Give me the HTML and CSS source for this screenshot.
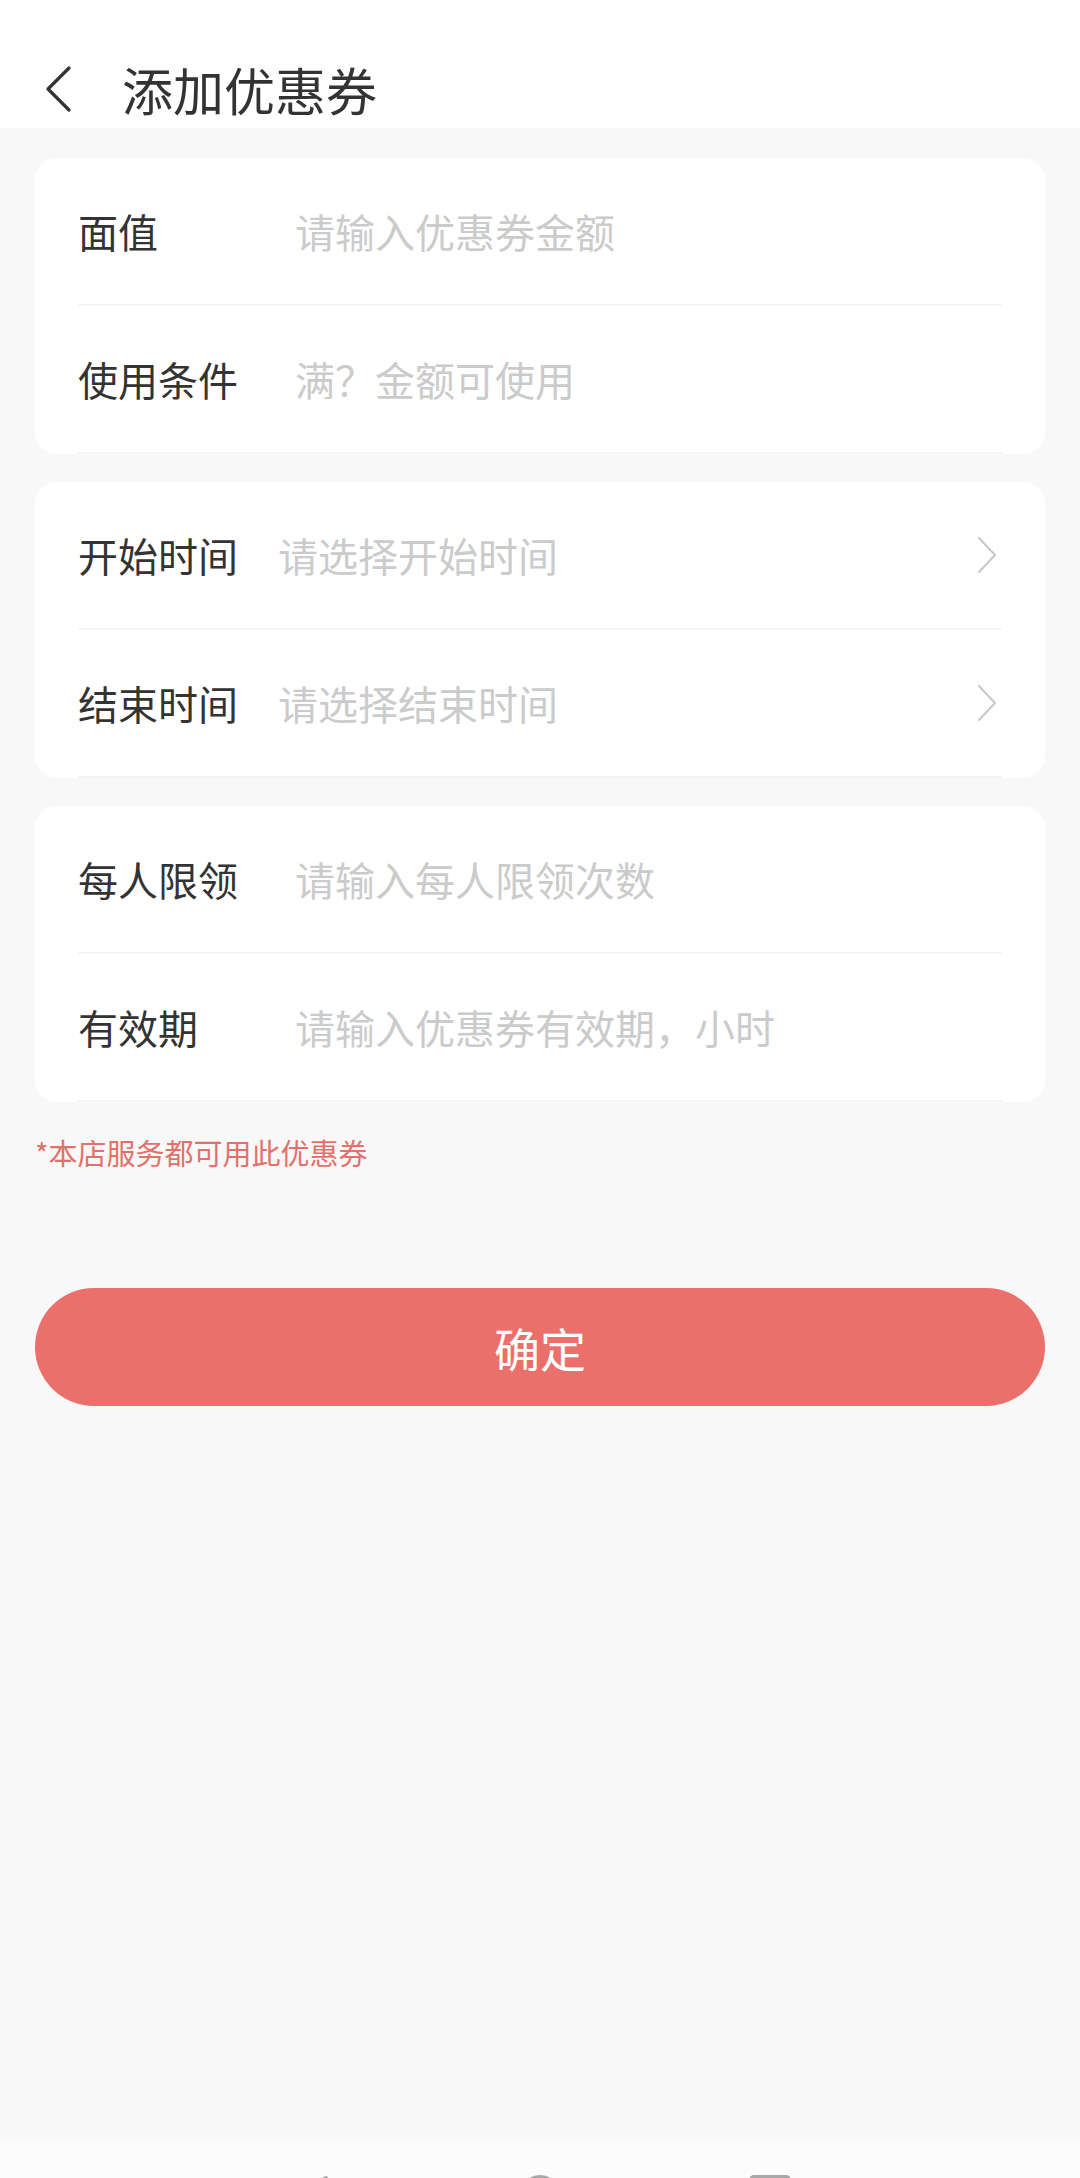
FILE: index.html
```html
<!DOCTYPE html>
<html lang="zh-CN">
<head>
    <meta charset="UTF-8">
    <meta name="viewport" content="width=device-width, initial-scale=1.0">
    <title>添加优惠券</title>
    <link rel="stylesheet" href="styles.css">
</head>
<body>
    <div class="header">
        <svg class="back" width="28" height="48" viewBox="0 0 28 48">
            <path d="M25 3 L4 24 L25 45" fill="none" stroke="#333" stroke-width="3.2" stroke-linecap="round" stroke-linejoin="round"/>
        </svg>
        <h1>添加优惠券</h1>
    </div>

    <div class="main">
        <div class="card">
            <div class="row">
                <span class="label fixed">面值</span>
                <span class="hint">请输入优惠券金额</span>
            </div>
            <div class="row">
                <span class="label fixed">使用条件</span>
                <span class="hint">满？金额可使用</span>
            </div>
        </div>

        <div class="card">
            <div class="row">
                <span class="label">开始时间</span>
                <span class="hint">请选择开始时间</span>
                <svg class="arrow" width="22" height="38" viewBox="0 0 22 38">
                    <path d="M3 2 L19 19 L3 36" fill="none" stroke="#c8c8c8" stroke-width="2" stroke-linecap="round" stroke-linejoin="round"/>
                </svg>
            </div>
            <div class="row">
                <span class="label">结束时间</span>
                <span class="hint">请选择结束时间</span>
                <svg class="arrow" width="22" height="38" viewBox="0 0 22 38">
                    <path d="M3 2 L19 19 L3 36" fill="none" stroke="#c8c8c8" stroke-width="2" stroke-linecap="round" stroke-linejoin="round"/>
                </svg>
            </div>
        </div>

        <div class="card">
            <div class="row">
                <span class="label fixed">每人限领</span>
                <span class="hint">请输入每人限领次数</span>
            </div>
            <div class="row">
                <span class="label fixed">有效期</span>
                <span class="hint">请输入优惠券有效期，小时</span>
            </div>
        </div>

        <p class="note">*本店服务都可用此优惠券</p>

        <button class="submit">确定</button>
    </div>

    <div class="navbar">
        <svg width="44" height="48" viewBox="0 0 44 48">
            <path d="M38 4 L6 24 L38 44 Z" fill="none" stroke="#a8a8a8" stroke-width="4" stroke-linejoin="round"/>
        </svg>
        <svg width="44" height="48" viewBox="0 0 44 48">
            <circle cx="22" cy="22" r="19" fill="none" stroke="#a8a8a8" stroke-width="4"/>
        </svg>
        <svg width="44" height="48" viewBox="0 0 44 48">
            <rect x="3" y="3" width="38" height="38" rx="3" fill="none" stroke="#a8a8a8" stroke-width="4"/>
        </svg>
    </div>
</body>
</html>
```

FILE: styles.css
```css
body {
    margin: 0;
    min-height: 100vh;
    display: flex;
    flex-direction: column;
    background-color: #f8f8f8;
    font-family: "Noto Sans CJK SC", "Noto Sans", sans-serif;
    color: #333;
}

.header {
    height: 78px;
    padding-top: 50px;
    background-color: #fff;
    display: flex;
    align-items: center;
}

.back {
    margin-left: 44px;
}

.header h1 {
    margin: 0 0 0 50px;
    font-size: 51px;
    font-weight: normal;
    color: #333;
}

.main {
    padding: 30px 35px 0;
}

.card {
    background-color: #fff;
    border-radius: 22px;
    padding: 0 43px;
    margin-bottom: 28px;
}

.row {
    height: 146px;
    border-bottom: 2px solid #f5f5f5;
    display: flex;
    align-items: center;
}

.label {
    font-size: 40px;
    color: #333;
    margin-right: 40px;
}

.label.fixed {
    width: 217px;
    margin-right: 0;
}

.hint {
    font-size: 40px;
    color: #cbcbcb;
}

.arrow {
    margin-left: auto;
    margin-right: 4px;
}

.note {
    margin: 30px 0 0 0;
    font-size: 29px;
    line-height: 40px;
    color: #e3716b;
}

.submit {
    display: block;
    width: 100%;
    height: 118px;
    margin-top: 116px;
    border: none;
    border-radius: 59px;
    background-color: #eb706b;
    color: #fff;
    font-family: inherit;
    font-size: 46px;
}

.navbar {
    margin-top: auto;
    height: 37px;
    overflow: hidden;
    background-color: #fcfcfc;
    display: flex;
    justify-content: center;
    gap: 186px;
}

.navbar svg {
    margin-top: 33px;
    flex-shrink: 0;
}
```
